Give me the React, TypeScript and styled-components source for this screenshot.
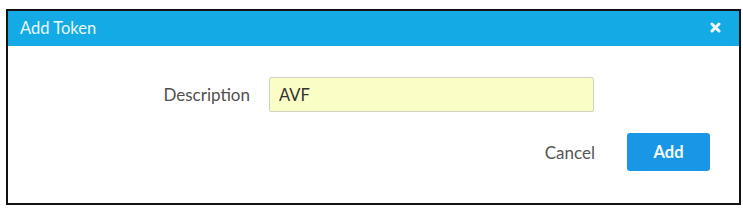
import React, { useState } from "react";
import styled, { createGlobalStyle } from "styled-components";

const GlobalStyle = createGlobalStyle`
  html, body {
    margin: 0;
    padding: 0;
    background: #ffffff;
    font-family: Lato, "Open Sans", "Liberation Sans", sans-serif;
  }
`;

const Page = styled.div`
  padding: 9px 0 0 6px;
`;

const Dialog = styled.div`
  width: 731px;
  height: 192px;
  border: 2px solid #111;
  background: #fff;
  display: flex;
  flex-direction: column;
  box-sizing: content-box;
`;

const Header = styled.div`
  height: 35px;
  background: #14aae6;
  display: flex;
  align-items: center;
  justify-content: space-between;
  padding: 0 18px 2px 12px;
  box-sizing: border-box;
  color: #e8f7fd;
  font-size: 16.5px;
`;

const CloseButton = styled.button`
  border: none;
  background: none;
  padding: 0;
  color: #f2fbff;
  cursor: pointer;
  display: flex;
  align-items: center;
`;

const Body = styled.div`
  flex: 1;
  display: flex;
  flex-direction: column;
  padding: 31px 29px 0 0;
`;

const FormRow = styled.div`
  display: flex;
  align-items: center;
  gap: 19px;
  padding-left: 150px;
`;

const Label = styled.label`
  width: 92px;
  text-align: right;
  font-size: 17px;
  color: #505050;
`;

const Input = styled.input`
  width: 325px;
  height: 35px;
  box-sizing: border-box;
  border: 1px solid #cfd2c4;
  border-radius: 2px;
  background: #fbfdc6;
  padding: 0 9px;
  font-family: inherit;
  font-size: 16.5px;
  color: #333;
  outline: none;
`;

const Actions = styled.div`
  display: flex;
  justify-content: flex-end;
  align-items: center;
  gap: 32px;
  margin-top: 21px;
`;

const TextButton = styled.button`
  border: none;
  background: none;
  padding: 0;
  font-family: inherit;
  font-size: 17px;
  color: #555;
  cursor: pointer;
`;

const PrimaryButton = styled.button`
  width: 83px;
  height: 38px;
  border: none;
  border-radius: 3px;
  background: #1a96e6;
  color: #f4faff;
  font-family: inherit;
  font-size: 16.5px;
  font-weight: 700;
  cursor: pointer;
`;

const App = () => {
  const [description, setDescription] = useState<string>("AVF");

  return (
    <>
      <GlobalStyle />
      <Page>
        <Dialog>
          <Header>
            <span>Add Token</span>
            <CloseButton aria-label="Close">
              <svg width="11" height="11" viewBox="0 0 11 11">
                <path
                  d="M2 2 L9 9 M9 2 L2 9"
                  stroke="currentColor"
                  strokeWidth="3"
                  strokeLinecap="round"
                />
              </svg>
            </CloseButton>
          </Header>
          <Body>
            <FormRow>
              <Label htmlFor="description">Description</Label>
              <Input
                id="description"
                value={description}
                onChange={(e) => setDescription(e.target.value)}
              />
            </FormRow>
            <Actions>
              <TextButton>Cancel</TextButton>
              <PrimaryButton>Add</PrimaryButton>
            </Actions>
          </Body>
        </Dialog>
      </Page>
    </>
  );
};

export default App;
